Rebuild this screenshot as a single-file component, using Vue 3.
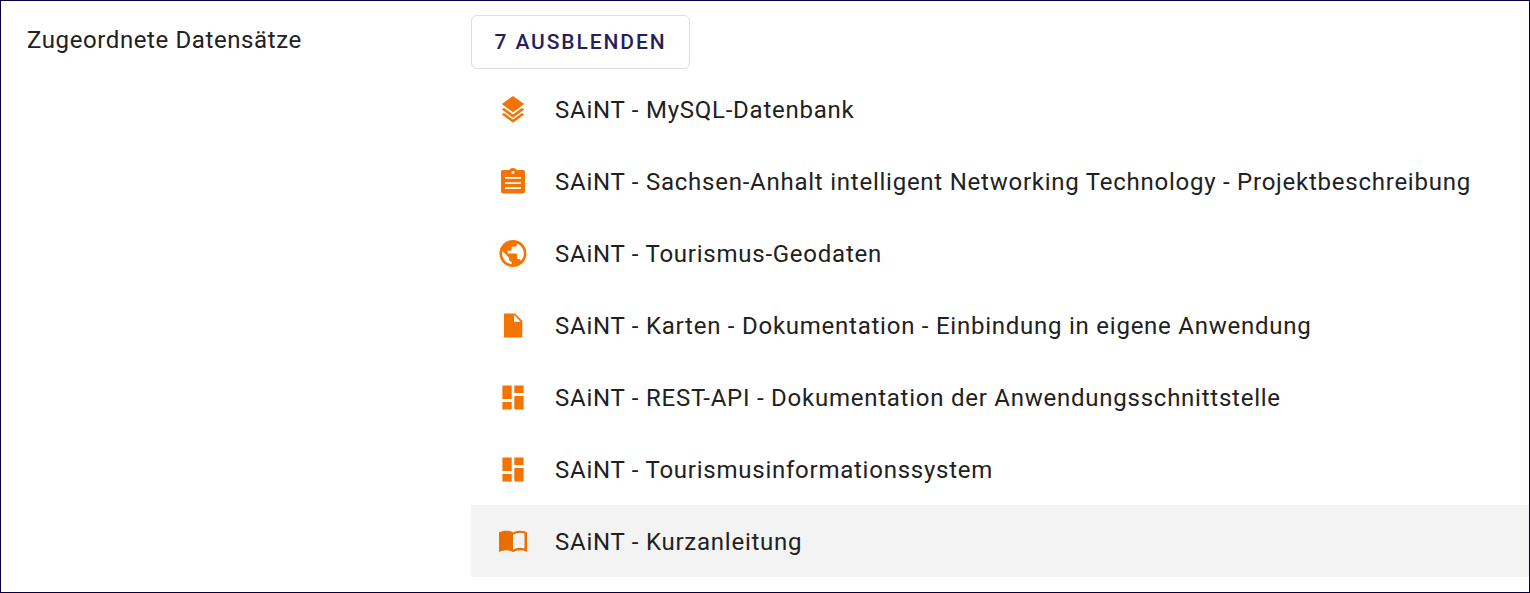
<script setup>
const icons = {
  stack: 'M14 1 2.800 9 14 17.300 25.200 9zM2.800 14.400 5 12.900 14 19.500l9-6.600 2.200 1.500L14 22.700zM2.800 19.500 5 18l9 6.500 9-6.500 2.200 1.500L14 27.800z',
  assignment: 'M4 3h6.300C10.900 1.800 12.200 1 14 1s3.100.800 3.700 2H24c1.100 0 2 .900 2 2v19.400c0 1.100-.900 2-2 2H4c-1.100 0-2-.900-2-2V5c0-1.100.900-2 2-2zM14 3.700a1.600 1.600 0 1 0 0 3.200 1.600 1.600 0 1 0 0-3.200zM6 10.100v1.700h16v-1.700zM6 15.200v1.700h16v-1.700zM6 20.200v1.700h16v-1.700z',
  globe: 'M12 2C6.480 2 2 6.480 2 12s4.480 10 10 10 10-4.480 10-10S17.520 2 12 2zm-1 17.930c-3.950-.490-7-3.850-7-7.930 0-.620.080-1.210.210-1.790L9 15v1c0 1.100.900 2 2 2v1.930zm6.900-2.540c-.260-.810-1-1.390-1.900-1.390h-1v-3c0-.550-.450-1-1-1H8v-2h2c.550 0 1-.450 1-1V7h2c1.100 0 2-.900 2-2v-.410c2.930 1.190 5 4.060 5 7.410 0 2.080-.800 3.970-2.100 5.390z',
  file: 'M5 2.400h11l7.300 7.300v16.800H5zM15 4v6.800h6.700z',
  dashboard: 'M3.400 2.400h9.300v13.500H3.400zM3.400 19h9.300v7.600H3.400zM15.300 2.400h9.300v7.500h-9.300zM15.300 13.100h9.300v13.500h-9.300z',
  book: 'M21 5c-1.110-.350-2.330-.500-3.500-.500-1.950 0-4.050.400-5.500 1.500-1.450-1.100-3.550-1.500-5.500-1.500S2.450 4.900 1 6v14.650c0 .250.250.500.500.500C3.100 20.450 5.050 20 6.500 20c1.950 0 4.050.400 5.500 1.500 1.350-.850 3.800-1.500 5.500-1.500 1.650 0 3.350.300 4.750 1.050.410.210.750-.120.750-.450V6c-.600-.450-1.250-.750-2-1zm0 13.500c-1.100-.350-2.300-.500-3.500-.500-1.700 0-4.150.650-5.500 1.500V7.600c1.350-.850 3.800-1.500 5.500-1.500 1.200 0 2.400.150 3.500.500v11.900z',
}
const transforms = {
  globe: 'translate(-2.200 -1.700) scale(1.350)',
  book: 'translate(-1.270 -2.100) scale(1.273)',
}
const items = [
  { icon: 'stack', title: 'SAiNT - MySQL-Datenbank' },
  { icon: 'assignment', title: 'SAiNT - Sachsen-Anhalt intelligent Networking Technology - Projektbeschreibung' },
  { icon: 'globe', title: 'SAiNT - Tourismus-Geodaten' },
  { icon: 'file', title: 'SAiNT - Karten - Dokumentation - Einbindung in eigene Anwendung' },
  { icon: 'dashboard', title: 'SAiNT - REST-API - Dokumentation der Anwendungsschnittstelle' },
  { icon: 'dashboard', title: 'SAiNT - Tourismusinformationssystem' },
  { icon: 'book', title: 'SAiNT - Kurzanleitung', active: true },
]
</script>

<template>
  <section class="panel">
    <div class="label">Zugeordnete Datensätze</div>
    <div class="content">
      <button class="toggle" type="button">7 ausblenden</button>
      <ul class="list">
        <li v-for="item in items" :key="item.title" class="row" :class="{ active: item.active }">
          <svg class="icon" viewBox="0 0 28 28"><path fill-rule="evenodd" :transform="transforms[item.icon]" :d="icons[item.icon]" /></svg>
          <span class="title">{{ item.title }}</span>
        </li>
      </ul>
    </div>
  </section>
</template>

<style>
body { margin: 0; background: #fff; }
</style>

<style scoped>
.panel {
  box-sizing: border-box;
  display: flex;
  gap: 26px;
  width: 1530px;
  height: 593px;
  border: 1px solid #040040;
  overflow: hidden;
  font-family: Roboto, sans-serif;
  font-size: 24px;
  letter-spacing: 0.755px;
  color: #212121;
}
.label { width: 444px; padding: 23px 0 0 26px; box-sizing: border-box; line-height: 32px; letter-spacing: 0.6px; flex: none; }
.content { width: 1058px; padding-top: 14px; flex: none; }
.toggle {
  display: block;
  box-sizing: border-box;
  width: 219px;
  height: 54px;
  padding: 0;
  border: 1px solid #dfdfdf;
  border-radius: 6px;
  background: #fff;
  color: #261f5c;
  font: 500 21px/52px Roboto, sans-serif;
  letter-spacing: 1.9px;
  text-transform: uppercase;
}
.list { list-style: none; margin: 4px 0 0; padding: 0; }
.row { display: flex; align-items: center; height: 72px; padding-left: 28px; }
.row.active { background: #f3f3f3; }
.icon { width: 28px; height: 28px; margin-right: 28px; fill: #f57300; flex: none; }
.active .icon { fill: #e96d00; }
.title { white-space: nowrap; padding-top: 2px; line-height: 32px; }
</style>
